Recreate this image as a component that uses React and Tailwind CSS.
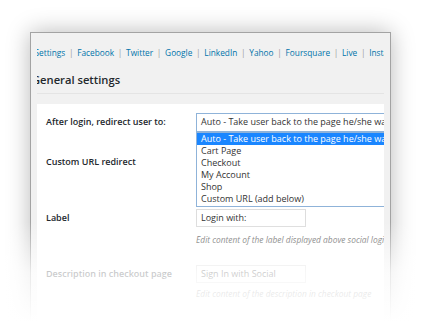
export default function App() {
  const links = ['Facebook', 'Twitter', 'Google', 'LinkedIn', 'Yahoo', 'Foursquare', 'Live', 'Instagram'];
  const options = ['Auto - Take user back to the page he/she was on', 'Cart Page', 'Checkout', 'My Account', 'Shop', 'Custom URL (add below)'];

  return (
    <div className="relative w-[421px] h-[322px] overflow-hidden bg-white pl-[30px] pt-[32px] font-['Open_Sans',sans-serif]">
      <div className="w-[361px] h-[330px] overflow-hidden border border-[#a3a3a3] bg-[#f1f1f1] px-[6px] shadow-[0_0_22px_rgba(0,0,0,0.28)]">
        <div className="h-full overflow-hidden">
          {/* tabs */}
          <div className="mt-[14px] h-[12px]">
            <div className="-ml-[2.5px] flex items-center whitespace-nowrap text-[8.3px] leading-[12px] text-[#0073aa]">
              <span>Settings</span>
              {links.map((l) => (
                <span key={l} className="flex items-center">
                  <span className="mx-[3.7px] text-[#999]">|</span>
                  <span>{l}</span>
                </span>
              ))}
            </div>
          </div>

          {/* heading */}
          <div className="mt-[14px] h-[14px]">
            <h2 className="-ml-[5px] whitespace-nowrap text-[11.2px] font-semibold leading-[14px] text-[#23282d]">General settings</h2>
          </div>
          <div className="mt-[6px] border-t border-[#e4e4e4]" />

          {/* panel */}
          <div className="relative mt-[10px] h-[240px] overflow-hidden bg-white pl-[9px] pt-[9px] text-[9px] text-[#23282d]">
            <div className="flex h-[18px] items-center">
              <div className="w-[150px] shrink-0 font-semibold">After login, redirect user to:</div>
              <div className="relative">
                <div className="flex h-[19px] w-[240px] items-center whitespace-nowrap border border-[#8fb3d9] bg-white pl-[4px] text-[#333]">
                  {options[0]}
                </div>
                {/* open dropdown */}
                <div className="absolute left-0 top-[19px] z-10 w-[240px] border border-[#8fb3d9] bg-white pb-[1px] text-[#333]">
                  {options.map((o, i) => (
                    <div
                      key={o}
                      className={`h-[12px] whitespace-nowrap pl-[4px] leading-[12px] ${i === 0 ? 'bg-[#1a86ff] text-white' : ''}`}
                    >
                      {o}
                    </div>
                  ))}
                </div>
              </div>
            </div>

            <div className="mt-[22px] flex h-[18px] items-center">
              <div className="w-[150px] shrink-0 font-semibold">Custom URL redirect</div>
              <div className="h-[18px] w-[180px] border border-[#ddd]" />
            </div>

            <div className="mt-[38px] flex h-[18px] items-center">
              <div className="w-[150px] shrink-0 font-semibold">Label</div>
              <div className="flex h-[18px] w-[110px] items-center border border-[#ddd] pl-[4px] text-[#333]">Login with:</div>
            </div>
            <div className="ml-[150px] mt-[7px] whitespace-nowrap text-[8.4px] italic leading-[12px] text-[#666]">
              Edit content of the label displayed above social login buttons
            </div>

            <div className="mt-[19px] flex h-[18px] items-center">
              <div className="w-[150px] shrink-0 font-semibold">Description in checkout page</div>
              <div className="flex h-[18px] w-[110px] items-center border border-[#ddd] pl-[4px] text-[#333]">Sign In with Social</div>
            </div>
            <div className="ml-[150px] mt-[5px] whitespace-nowrap text-[8.4px] italic leading-[12px] text-[#666]">
              Edit content of the description in checkout page
            </div>
          </div>
        </div>
      </div>

      {/* bottom fade */}
      <div className="pointer-events-none absolute bottom-0 left-0 h-[100px] w-full bg-gradient-to-b from-white/0 via-white/75 to-white" />
    </div>
  );
}
